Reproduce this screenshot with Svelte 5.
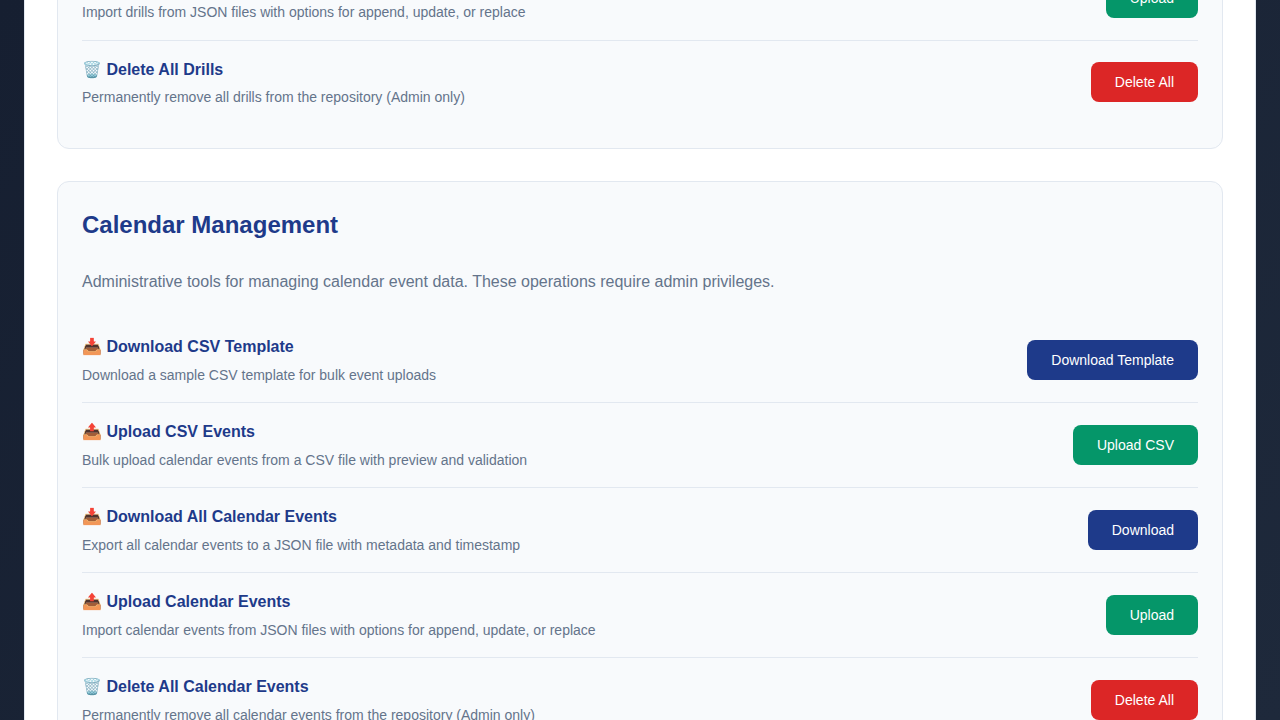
<script>
  const drills = [
    { icon: '📤', title: 'Upload Drills', text: 'Import drills from JSON files with options for append, update, or replace', action: 'Upload', tone: 'green' },
    { icon: '🗑️', title: 'Delete All Drills', text: 'Permanently remove all drills from the repository (Admin only)', action: 'Delete All', tone: 'red' }
  ];
  const events = [
    { icon: '📥', title: 'Download CSV Template', text: 'Download a sample CSV template for bulk event uploads', action: 'Download Template', tone: 'blue' },
    { icon: '📤', title: 'Upload CSV Events', text: 'Bulk upload calendar events from a CSV file with preview and validation', action: 'Upload CSV', tone: 'green' },
    { icon: '📥', title: 'Download All Calendar Events', text: 'Export all calendar events to a JSON file with metadata and timestamp', action: 'Download', tone: 'blue' },
    { icon: '📤', title: 'Upload Calendar Events', text: 'Import calendar events from JSON files with options for append, update, or replace', action: 'Upload', tone: 'green' },
    { icon: '🗑️', title: 'Delete All Calendar Events', text: 'Permanently remove all calendar events from the repository (Admin only)', action: 'Delete All', tone: 'red' }
  ];
</script>

{#snippet rows(items)}
  {#each items as item}
    <div class="row">
      <div class="info">
        <h4>{item.icon} {item.title}</h4>
        <p>{item.text}</p>
      </div>
      <button class={item.tone}>{item.action}</button>
    </div>
  {/each}
{/snippet}

<div class="viewport">
  <main>
    <section class="card first">{@render rows(drills)}</section>
    <section class="card">
      <h3>Calendar Management</h3>
      <p class="intro">Administrative tools for managing calendar event data. These operations require admin privileges.</p>
      {@render rows(events)}
    </section>
  </main>
</div>

<style>
  :global(body) { margin: 0; }
  * { box-sizing: border-box; }
  .viewport {
    height: 720px;
    overflow: hidden;
    padding: 0 24px;
    background: linear-gradient(135deg, #161f31, #1e293b);
    font-family: "Liberation Sans", Arial, sans-serif;
    line-height: 1.6;
    color: #64748b;
  }
  main {
    height: 820px;
    padding: 0 32px;
    background: #fff;
    border: solid #e2e8f0;
    border-width: 0 1px;
  }
  .card {
    padding: 24px;
    margin-bottom: 32px;
    background: #f8fafc;
    border: 1px solid #e2e8f0;
    border-radius: 12px;
  }
  .first { margin-top: -69.4px; }
  h3 {
    margin: 0 0 25px;
    font-size: 24px;
    line-height: 38.4px;
    color: #1e3a8a;
  }
  .intro { margin: 0 0 23px; font-size: 16px; line-height: 25.6px; }
  .row {
    display: flex;
    justify-content: space-between;
    align-items: center;
    height: 85px;
    border-bottom: 1px solid #e2e8f0;
  }
  .row:last-child { height: 84px; border-bottom: 0; }
  .first .row:last-child { height: 83px; }
  .info { margin-top: 1px; }
  h4 { margin: 0 0 5px; font-size: 16px; line-height: 25.6px; color: #1e3a8a; }
  .first h4 { margin-bottom: 3px; }
  .info p { margin: 0; font-size: 14px; line-height: 22.4px; }
  button {
    height: 40px;
    padding: 0 24px;
    border: 0;
    border-radius: 8px;
    font: 14px "Liberation Sans", Arial, sans-serif;
    color: #fff;
  }
  .blue { background: #1e3a8a; }
  .green { background: #059669; }
  .red { background: #dc2626; }
</style>
